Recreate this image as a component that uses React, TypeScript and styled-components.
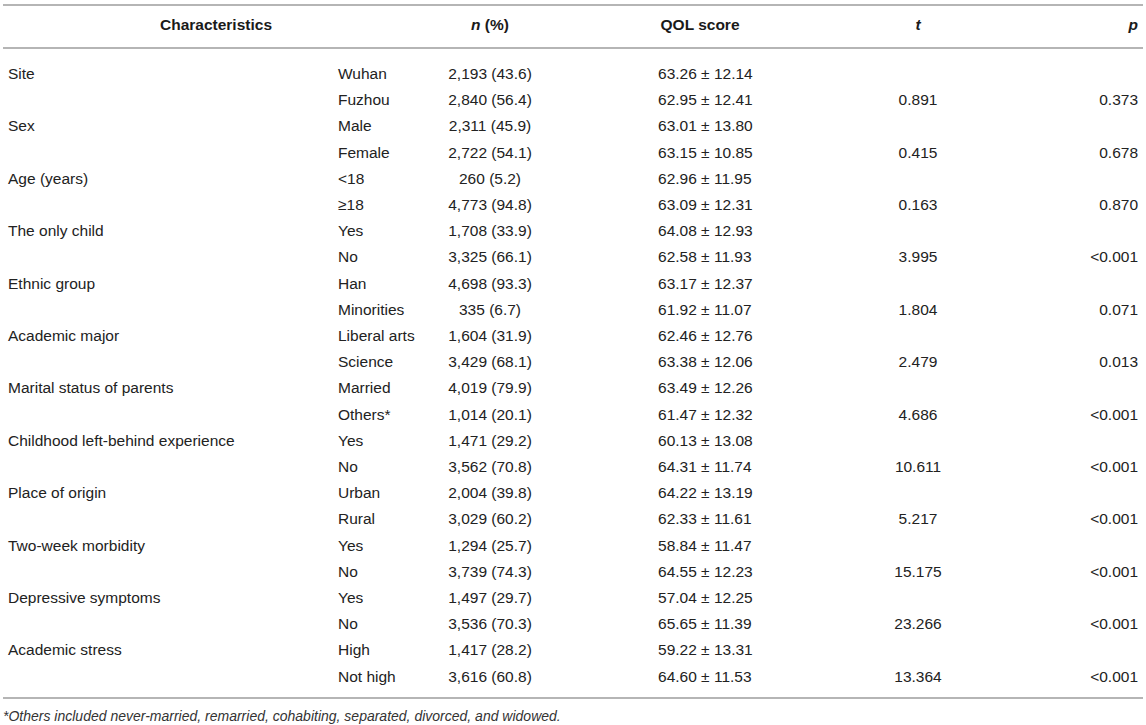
import React from "react";
import styled, { createGlobalStyle } from "styled-components";

const GlobalStyle = createGlobalStyle`
  html, body {
    margin: 0;
    padding: 0;
    background: #ffffff;
  }
  body {
    font-family: "Liberation Sans", Arial, sans-serif;
    color: #222222;
  }
`;

type Align = "left" | "center" | "right";

interface Row {
  group?: string;
  level: string;
  n: string;
  qol: string;
  t?: string;
  p?: string;
}

const rows: Row[] = [
  { group: "Site", level: "Wuhan", n: "2,193 (43.6)", qol: "63.26 ± 12.14" },
  { level: "Fuzhou", n: "2,840 (56.4)", qol: "62.95 ± 12.41", t: "0.891", p: "0.373" },
  { group: "Sex", level: "Male", n: "2,311 (45.9)", qol: "63.01 ± 13.80" },
  { level: "Female", n: "2,722 (54.1)", qol: "63.15 ± 10.85", t: "0.415", p: "0.678" },
  { group: "Age (years)", level: "<18", n: "260 (5.2)", qol: "62.96 ± 11.95" },
  { level: "≥18", n: "4,773 (94.8)", qol: "63.09 ± 12.31", t: "0.163", p: "0.870" },
  { group: "The only child", level: "Yes", n: "1,708 (33.9)", qol: "64.08 ± 12.93" },
  { level: "No", n: "3,325 (66.1)", qol: "62.58 ± 11.93", t: "3.995", p: "<0.001" },
  { group: "Ethnic group", level: "Han", n: "4,698 (93.3)", qol: "63.17 ± 12.37" },
  { level: "Minorities", n: "335 (6.7)", qol: "61.92 ± 11.07", t: "1.804", p: "0.071" },
  { group: "Academic major", level: "Liberal arts", n: "1,604 (31.9)", qol: "62.46 ± 12.76" },
  { level: "Science", n: "3,429 (68.1)", qol: "63.38 ± 12.06", t: "2.479", p: "0.013" },
  { group: "Marital status of parents", level: "Married", n: "4,019 (79.9)", qol: "63.49 ± 12.26" },
  { level: "Others*", n: "1,014 (20.1)", qol: "61.47 ± 12.32", t: "4.686", p: "<0.001" },
  { group: "Childhood left-behind experience", level: "Yes", n: "1,471 (29.2)", qol: "60.13 ± 13.08" },
  { level: "No", n: "3,562 (70.8)", qol: "64.31 ± 11.74", t: "10.611", p: "<0.001" },
  { group: "Place of origin", level: "Urban", n: "2,004 (39.8)", qol: "64.22 ± 13.19" },
  { level: "Rural", n: "3,029 (60.2)", qol: "62.33 ± 11.61", t: "5.217", p: "<0.001" },
  { group: "Two-week morbidity", level: "Yes", n: "1,294 (25.7)", qol: "58.84 ± 11.47" },
  { level: "No", n: "3,739 (74.3)", qol: "64.55 ± 12.23", t: "15.175", p: "<0.001" },
  { group: "Depressive symptoms", level: "Yes", n: "1,497 (29.7)", qol: "57.04 ± 12.25" },
  { level: "No", n: "3,536 (70.3)", qol: "65.65 ± 11.39", t: "23.266", p: "<0.001" },
  { group: "Academic stress", level: "High", n: "1,417 (28.2)", qol: "59.22 ± 13.31" },
  { level: "Not high", n: "3,616 (60.8)", qol: "64.60 ± 11.53", t: "13.364", p: "<0.001" },
];

export default function App() {
  return (
    <>
      <GlobalStyle />
      <Page>
        <Table>
          <colgroup>
            <col style={{ width: 330 }} />
            <col style={{ width: 96 }} />
            <col style={{ width: 114 }} />
            <col style={{ width: 314 }} />
            <col style={{ width: 122 }} />
            <col style={{ width: 164 }} />
          </colgroup>
          <thead>
            <tr>
              <HeadCell $align="center" colSpan={2}>
                Characteristics
              </HeadCell>
              <HeadCell $align="center" $shift={8}>
                <i>n</i> (%)
              </HeadCell>
              <HeadCell $align="center">QOL score</HeadCell>
              <HeadCell $align="center">
                <i>t</i>
              </HeadCell>
              <HeadCell $align="right">
                <i>p</i>
              </HeadCell>
            </tr>
          </thead>
          <tbody>
            {rows.map((r, i) => (
              <BodyRow key={i} $first={i === 0} $last={i === rows.length - 1}>
                <Cell $align="left">{r.group}</Cell>
                <Cell $align="left">{r.level}</Cell>
                <Cell $align="center" $shift={8}>
                  {r.n}
                </Cell>
                <ScoreCell>{r.qol}</ScoreCell>
                <Cell $align="center">{r.t}</Cell>
                <Cell $align="right">{r.p}</Cell>
              </BodyRow>
            ))}
          </tbody>
        </Table>
        <Footnote>
          *Others included never-married, remarried, cohabiting, separated, divorced, and widowed.
        </Footnote>
      </Page>
    </>
  );
}

const Page = styled.div`
  width: 1140px;
  padding: 4px 0 0 3px;
`;

const Table = styled.table`
  width: 1140px;
  table-layout: fixed;
  border-collapse: collapse;
  border-top: 2px solid #b5b5b5;
  border-bottom: 2px solid #b5b5b5;
  font-size: 15.5px;

  thead tr {
    border-bottom: 2px solid #b5b5b5;
  }
`;

const HeadCell = styled.th<{ $align?: Align; $shift?: number }>`
  height: 38px;
  padding: 0 5px 3px;
  padding-left: ${(p) => 5 + (p.$shift || 0)}px;
  text-align: ${(p) => p.$align || "left"};
  font-weight: bold;
  white-space: nowrap;
  color: #1a1a1a;

  i {
    font-style: italic;
  }
`;

const BodyRow = styled.tr<{ $first?: boolean; $last?: boolean }>`
  td {
    height: 26.2px;
    padding-top: ${(p) => (p.$first ? "12px" : "0")};
    padding-bottom: ${(p) => (p.$last ? "7px" : "0")};
  }
`;

const Cell = styled.td<{ $align: Align; $shift?: number }>`
  padding-left: ${(p) => 5 + (p.$shift || 0)}px;
  padding-right: 5px;
  text-align: ${(p) => p.$align};
  white-space: nowrap;
  line-height: 26.2px;
  vertical-align: middle;
`;

const ScoreCell = styled.td`
  padding-left: 115px;
  text-align: left;
  white-space: nowrap;
  line-height: 26.2px;
`;

const Footnote = styled.p`
  margin: 9px 0 0;
  font-size: 14px;
  font-style: italic;
  color: #333333;
`;
